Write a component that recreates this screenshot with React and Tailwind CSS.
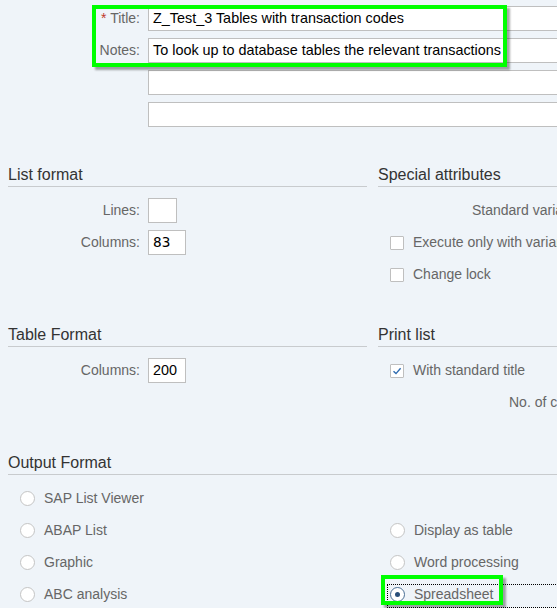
import React from "react";

const font = "font-['Liberation_Sans',Arial,sans-serif]";

function Box({ className = "", children }) {
  return (
    <div className={`h-[25px] border border-[#bfbfbf] bg-white flex items-center pl-[4px] text-[14.4px] text-black whitespace-nowrap ${className}`}>
      {children}
    </div>
  );
}

function Header({ children, className = "" }) {
  return (
    <div className={`h-[24px] border-b border-[#c8cbce] text-[16px] leading-[23px] text-[#333] ${className}`}>
      {children}
    </div>
  );
}

function Check({ checked }) {
  return (
    <div className="w-[14px] h-[14px] border border-[#bfbfbf] bg-white rounded-[1px] flex items-center justify-center shrink-0">
      {checked && (
        <svg width="10" height="10" viewBox="0 0 10 10">
          <path d="M1.5 5.2 L4 7.6 L8.6 2.2" fill="none" stroke="#2e6bb0" strokeWidth="1.4" />
        </svg>
      )}
    </div>
  );
}

function Radio({ selected }) {
  return (
    <div
      className={`w-[15px] h-[15px] rounded-full border bg-white flex items-center justify-center shrink-0 ${
        selected ? "border-[#4a6e94]" : "border-[#c4c4c4]"
      }`}
    >
      {selected && <div className="w-[5px] h-[5px] rounded-full bg-[#2a4f7a]" />}
    </div>
  );
}

function OptRow({ kind, checked, label }) {
  return (
    <div className="h-[25px] flex items-center pl-[12px]">
      {kind === "check" ? <Check checked={checked} /> : <Radio selected={checked} />}
      <span className="ml-[9px] text-[14px] text-[#666] whitespace-nowrap">{label}</span>
    </div>
  );
}

function LabelRow({ label, children }) {
  return (
    <div className="h-[25px] flex items-center">
      <div className="w-[132px] text-right text-[14px] text-[#666]">{label}</div>
      <div className="ml-[8px]">{children}</div>
    </div>
  );
}

export default function App() {
  return (
    <div className={`w-[557px] h-[608px] overflow-hidden bg-[#eff4f9] relative ${font}`}>
      <div className="w-[760px]">
        {/* Top fields */}
        <div className="pt-[6px] flex flex-col gap-[7px]">
          {[
            { label: "Title:", req: true, text: "Z_Test_3 Tables with transaction codes" },
            { label: "Notes:", text: "To look up to database tables the relevant transactions" },
            { label: "", text: "" },
            { label: "", text: "" },
          ].map((r, i) => (
            <div key={i} className="flex items-center">
              <div className="w-[140px] text-right text-[14px] text-[#666]">
                {r.req && <span className="text-[#c0392b]">* </span>}
                {r.label}
              </div>
              <Box className="ml-[8px] flex-1">{r.text}</Box>
            </div>
          ))}
        </div>

        {/* List format / Special attributes */}
        <div className="mt-[36px] grid grid-cols-[359px_1fr] gap-x-[11px] pl-[8px]">
          <div>
            <Header>List format</Header>
            <div className="mt-[11px] flex flex-col gap-[7px]">
              <LabelRow label="Lines:">
                <Box className="w-[29px]" />
              </LabelRow>
              <LabelRow label="Columns:">
                <Box className="w-[38px] font-['DejaVu_Sans_Mono',monospace] text-[13px]">83</Box>
              </LabelRow>
            </div>
          </div>
          <div>
            <Header>Special attributes</Header>
            <div className="mt-[11px] flex flex-col gap-[7px]">
              <div className="h-[25px] flex items-center pl-[94px] text-[14px] text-[#666] whitespace-nowrap">
                Standard variant:
              </div>
              <OptRow kind="check" label="Execute only with variant" />
              <OptRow kind="check" label="Change lock" />
            </div>
          </div>
        </div>

        {/* Table Format / Print list */}
        <div className="mt-[36px] grid grid-cols-[359px_1fr] gap-x-[11px] pl-[8px]">
          <div>
            <Header>Table Format</Header>
            <div className="mt-[11px] flex flex-col gap-[7px]">
              <LabelRow label="Columns:">
                <Box className="w-[38px]">200</Box>
              </LabelRow>
            </div>
          </div>
          <div>
            <Header>Print list</Header>
            <div className="mt-[11px] flex flex-col gap-[7px]">
              <OptRow kind="check" checked label="With standard title" />
              <div className="h-[25px] flex items-center pl-[131px] text-[14px] text-[#666] whitespace-nowrap">
                No. of copies:
              </div>
            </div>
          </div>
        </div>

        {/* Output Format */}
        <div className="mt-[36px] pl-[8px]">
          <Header>Output Format</Header>
          <div className="mt-[11px] grid grid-cols-[359px_1fr] gap-x-[11px]">
            <div className="flex flex-col gap-[7px]">
              <OptRow kind="radio" label="SAP List Viewer" />
              <OptRow kind="radio" label="ABAP List" />
              <OptRow kind="radio" label="Graphic" />
              <OptRow kind="radio" label="ABC analysis" />
            </div>
            <div className="flex flex-col gap-[7px]">
              <div className="h-[25px]" />
              <OptRow kind="radio" label="Display as table" />
              <OptRow kind="radio" label="Word processing" />
              <div className="relative">
                <div className="absolute left-[9px] top-[2px] bottom-[-1px] right-0 border border-dotted border-black" />
                <OptRow kind="radio" checked label="Spreadsheet" />
              </div>
            </div>
          </div>
        </div>
      </div>

      {/* Annotation highlight boxes */}
      <div className="absolute left-[92px] top-[5px] w-[415px] h-[62px] border-[4px] border-[#00ff00] shadow-[3px_3px_2px_rgba(0,0,0,0.35)]" />
      <div className="absolute left-[381px] top-[575px] w-[122px] h-[30px] border-[4px] border-[#00ff00] shadow-[3px_3px_2px_rgba(0,0,0,0.35)]" />
    </div>
  );
}
